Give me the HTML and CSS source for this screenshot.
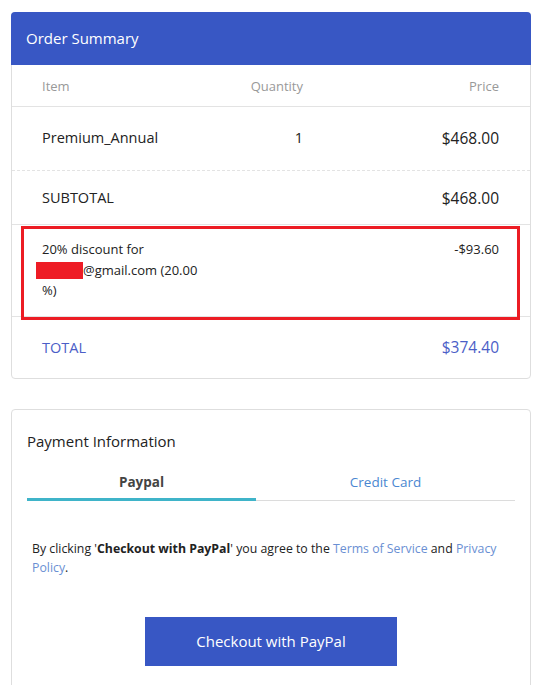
FILE: index.html
```html
<!DOCTYPE html>
<html>
<head>
<meta charset="utf-8">
<link rel="stylesheet" href="styles.css">
</head>
<body>
<div class="page">
  <section class="card summary">
    <div class="card-head">Order Summary</div>
    <div class="row row-head">
      <div class="c-item">Item</div>
      <div class="c-qty">Quantity</div>
      <div class="c-price">Price</div>
    </div>
    <div class="row row-product">
      <div class="c-item">Premium_Annual</div>
      <div class="c-qty">1</div>
      <div class="c-price">$468.00</div>
    </div>
    <div class="row row-sub">
      <div class="c-item">SUBTOTAL</div>
      <div class="c-qty"></div>
      <div class="c-price">$468.00</div>
    </div>
    <div class="row row-discount">
      <div class="c-item disc-text">20% discount for<br><span class="redact"></span>@gmail.com (20.00<br>%)</div>
      <div class="c-price">-$93.60</div>
      <div class="highlight"></div>
    </div>
    <div class="row row-total">
      <div class="c-item">TOTAL</div>
      <div class="c-qty"></div>
      <div class="c-price">$374.40</div>
    </div>
  </section>

  <section class="card payment">
    <h2 class="pay-title">Payment Information</h2>
    <div class="tabs">
      <div class="tab active">Paypal</div>
      <div class="tab">Credit Card</div>
    </div>
    <p class="terms">By clicking '<b>Checkout with PayPal</b>' you agree to the <a class="link">Terms of Service</a> and <a class="link">Privacy Policy</a>.</p>
    <div class="btn-wrap">
      <button class="btn">Checkout with PayPal</button>
    </div>
  </section>
</div>
</body>
</html>
```

FILE: styles.css
```css
* { box-sizing: border-box; }
html, body { margin: 0; padding: 0; background: #fff; }
body {
  font-family: "Open Sans", "Liberation Sans", sans-serif;
  color: #222;
  overflow: hidden;
  height: 685px;
}
.page {
  padding: 12px 10px 0 11px;
}
.card {
  width: 520px;
  border: 1px solid #dedede;
  border-radius: 4px;
  background: #fff;
}
.card-head {
  background: #3857c4;
  color: #fff;
  font-size: 15px;
  height: 53px;
  line-height: 53px;
  padding-left: 15px;
  margin: -1px -1px 0 -1px;
  border-radius: 4px 4px 0 0;
}
.row {
  position: relative;
  display: grid;
  grid-template-columns: 150px 111px 1fr;
  padding: 0 31px 0 30px;
  font-size: 14.5px;
  align-items: center;
}
.c-qty { text-align: right; }
.c-price { text-align: right; }
.row-head {
  height: 42px;
  color: #999;
  font-size: 13px;
  border-bottom: 1px solid #e3e3e3;
}
.row-product {
  height: 64px;
  border-bottom: 1px dashed #e3e3e3;
  padding-bottom: 2px;
}
.row-product .c-price, .row-sub .c-price, .row-total .c-price {
  font-size: 15.5px;
}
.row-sub {
  height: 54px;
  border-bottom: 1px solid #e3e3e3;
}
.row-discount {
  grid-template-columns: 261px 1fr;
  align-items: start;
  font-size: 13px;
  padding-top: 14px;
  padding-bottom: 15px;
  border-bottom: 1px solid #e3e3e3;
  line-height: 20.5px;
}
.redact {
  display: inline-block;
  width: 47px;
  height: 17px;
  margin-left: -6px;
  background: #ee1c25;
  vertical-align: -4px;
}
.highlight {
  position: absolute;
  left: 9px;
  right: 10px;
  top: 1px;
  bottom: -4px;
  border: 3px solid #ec1c24;
  pointer-events: none;
}
.row-total {
  height: 61px;
  color: #4b5ec7;
}

.payment {
  margin-top: 30px;
  height: 300px;
  padding: 0 15px;
}
.pay-title {
  margin: 0;
  font-weight: normal;
  font-size: 15px;
  padding-top: 20px;
  line-height: 22px;
  color: #222;
}
.tabs {
  display: grid;
  grid-template-columns: 229px 1fr;
  margin-top: 20px;
  border-bottom: 1px solid #dcdcdc;
}
.tab {
  text-align: center;
  font-size: 13.5px;
  line-height: 20px;
  padding-bottom: 7px;
  color: #4a87d1;
}
.tab.active {
  color: #444;
  font-weight: bold;
  border-bottom: 3px solid #3fb4c9;
  margin-bottom: -1px;
  padding-bottom: 6px;
}
.terms {
  margin: 38px 0 0 5px;
  font-size: 12.3px;
  line-height: 19px;
  color: #222;
}
.terms b { font-weight: bold; }
.link { color: #6a8fd3; }
.btn-wrap {
  display: flex;
  justify-content: center;
  margin-top: 40px;
}
.btn {
  width: 252px;
  height: 49px;
  border: none;
  background: #3857c4;
  color: #fff;
  font-family: inherit;
  font-size: 15px;
  padding: 0;
}
```
